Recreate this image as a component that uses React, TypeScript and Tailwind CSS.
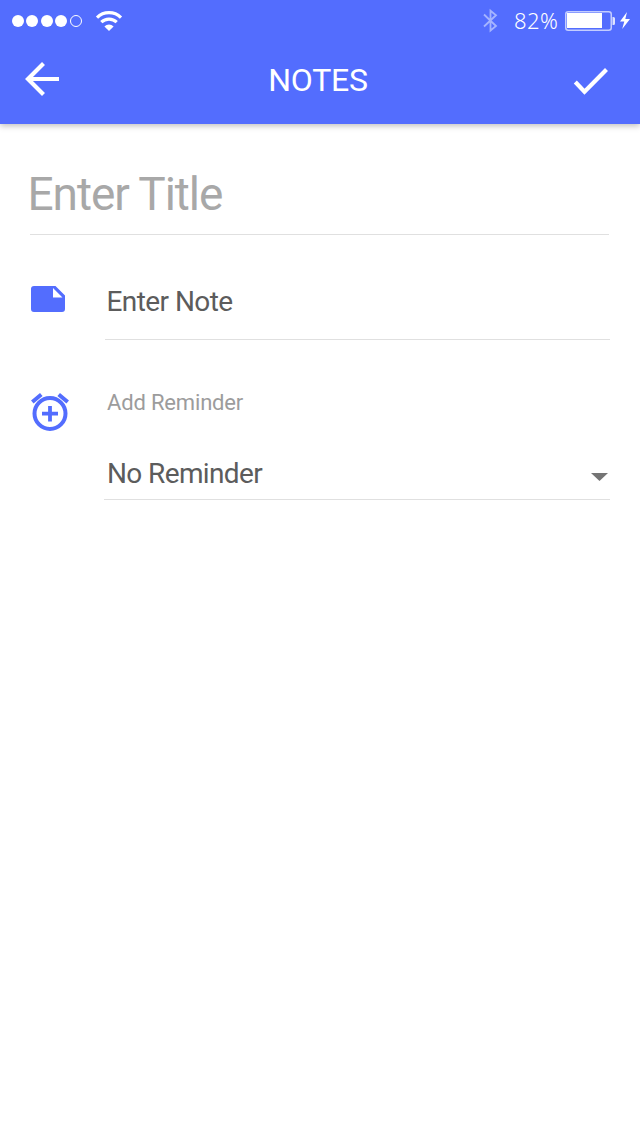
function StatusBar() {
  return (
    <div className="flex h-[42px] items-center">
      <svg className="h-[42px] w-[130px]" viewBox="0 0 130 42" fill="#fff">
        <circle cx="18" cy="21" r="6" />
        <circle cx="32" cy="21" r="6" />
        <circle cx="47" cy="21" r="6" />
        <circle cx="61" cy="21" r="6" />
        <circle cx="76" cy="21" r="5.5" fill="none" stroke="#fff" />
        <g fill="none" stroke="#fff" strokeWidth="3.2">
          <path d="M97 17.6a17.2 17.2 0 0 1 24 0" />
          <path d="M101.3 22.2a11 11 0 0 1 15.4 0" />
        </g>
        <path d="M104.4 26.4a6.6 6.6 0 0 1 9.2 0L109 31z" />
      </svg>
      <svg className="ml-auto h-[42px] w-[30px]" viewBox="480 0 30 42" fill="none" stroke="#a5b4ff" strokeWidth="1.8">
        <path d="M484 14.500l12 11.500-5.500 4.500V10.700l5.500 4.500L484 26.500" />
      </svg>
      <div className="h-[42px] w-[50px] pl-1 font-['Noto_Sans',sans-serif] text-[22px] leading-[40px] font-[360] tracking-[0.4px] text-white">82%</div>
      <svg className="h-[42px] w-[80px]" viewBox="560 0 80 42">
        <rect x="565.750" y="11.750" width="45.500" height="18.500" rx="2.500" fill="none" stroke="#c3cdff" strokeWidth="1.500" />
        <rect x="567" y="13" width="35" height="15" fill="#fff" />
        <path d="M612.500 17h1a1.500 1.500 0 0 1 1.500 1.500v5a1.500 1.500 0 0 1-1.500 1.500h-1z" fill="#dfe4ff" />
        <path d="M627 12l-7 9.500h4.300L622.200 29l7.800-10h-4.700z" fill="#fff" />
      </svg>
    </div>
  );
}

function Header() {
  return (
    <header className="h-[124px] bg-[#536dfe] shadow-[0_2px_6px_rgba(0,0,0,0.25)]">
      <StatusBar />
      <div className="flex h-[82px] justify-between">
        <svg className="h-[82px] w-[100px]" viewBox="0 42 100 82" fill="none" stroke="#fff" strokeWidth="4.200">
          <path d="M59 79H28M43.500 63.500L28 79l15.500 15.500" />
        </svg>
        <h1 className="pt-[19px] text-[32px] leading-[38px] font-[380] tracking-[-0.2px] text-white">NOTES</h1>
        <svg className="h-[82px] w-[104px]" viewBox="536 42 104 82" fill="none" stroke="#fff" strokeWidth="4.200">
          <path d="M575.300 82l9.200 9.700L606.500 69.500" />
        </svg>
      </div>
    </header>
  );
}

export default function App() {
  return (
    <div className="h-[1136px] w-[640px] overflow-hidden bg-white font-['Roboto',sans-serif]">
      <Header />
      <main>
        <div className="mr-[31px] ml-[30px] flex h-[111px] items-end border-b border-[#e0e0e0]">
          <span className="-ml-[2.500px] pb-[13px] text-[46px] leading-[54px] font-[370] tracking-[-1.050px] text-[#a8a8a8]">Enter Title</span>
        </div>
        <div className="flex h-[105px]">
          <svg className="h-[105px] w-[105px]" viewBox="0 235 105 105" fill="#536dfe">
            <path fillRule="evenodd" d="M34 286h21.500L65 295.500V309a3 3 0 0 1-3 3H34a3 3 0 0 1-3-3v-20a3 3 0 0 1 3-3zM53 288v9.500h9.500z" />
          </svg>
          <div className="mr-[30px] flex-1 border-b border-[#e0e0e0] pt-[50px] pl-[1.500px] text-[28px] leading-[33px] font-[370] tracking-[-0.570px] text-[#5c5c5c]">Enter Note</div>
        </div>
        <div className="flex h-[160px]">
          <svg className="h-[160px] w-[104px]" viewBox="0 340 104 160" fill="none" stroke="#536dfe" strokeWidth="4">
            <circle cx="50" cy="413.500" r="15.500" />
            <path d="M50 406v15.500M42 413.700h16" strokeWidth="3.800" />
            <path d="M32.300 402l9-7.500M67.700 402l-9-7.500" />
          </svg>
          <div className="mr-[30px] flex flex-1 flex-col border-b border-[#e0e0e0] pl-[3px]">
            <label className="pt-[50px] text-[22px] leading-[26px] font-[370] tracking-[-0.170px] text-[#9c9c9c]">Add Reminder</label>
            <div className="flex justify-between pt-[41px] text-[28px] leading-[33px] font-[370] tracking-[-0.620px] text-[#5c5c5c]">
              <span>No Reminder</span>
              <svg className="h-[33px] w-[20px]" viewBox="590 457 20 33" fill="#757575">
                <path d="M591 473h17l-8.500 8z" />
              </svg>
            </div>
          </div>
        </div>
      </main>
    </div>
  );
}
